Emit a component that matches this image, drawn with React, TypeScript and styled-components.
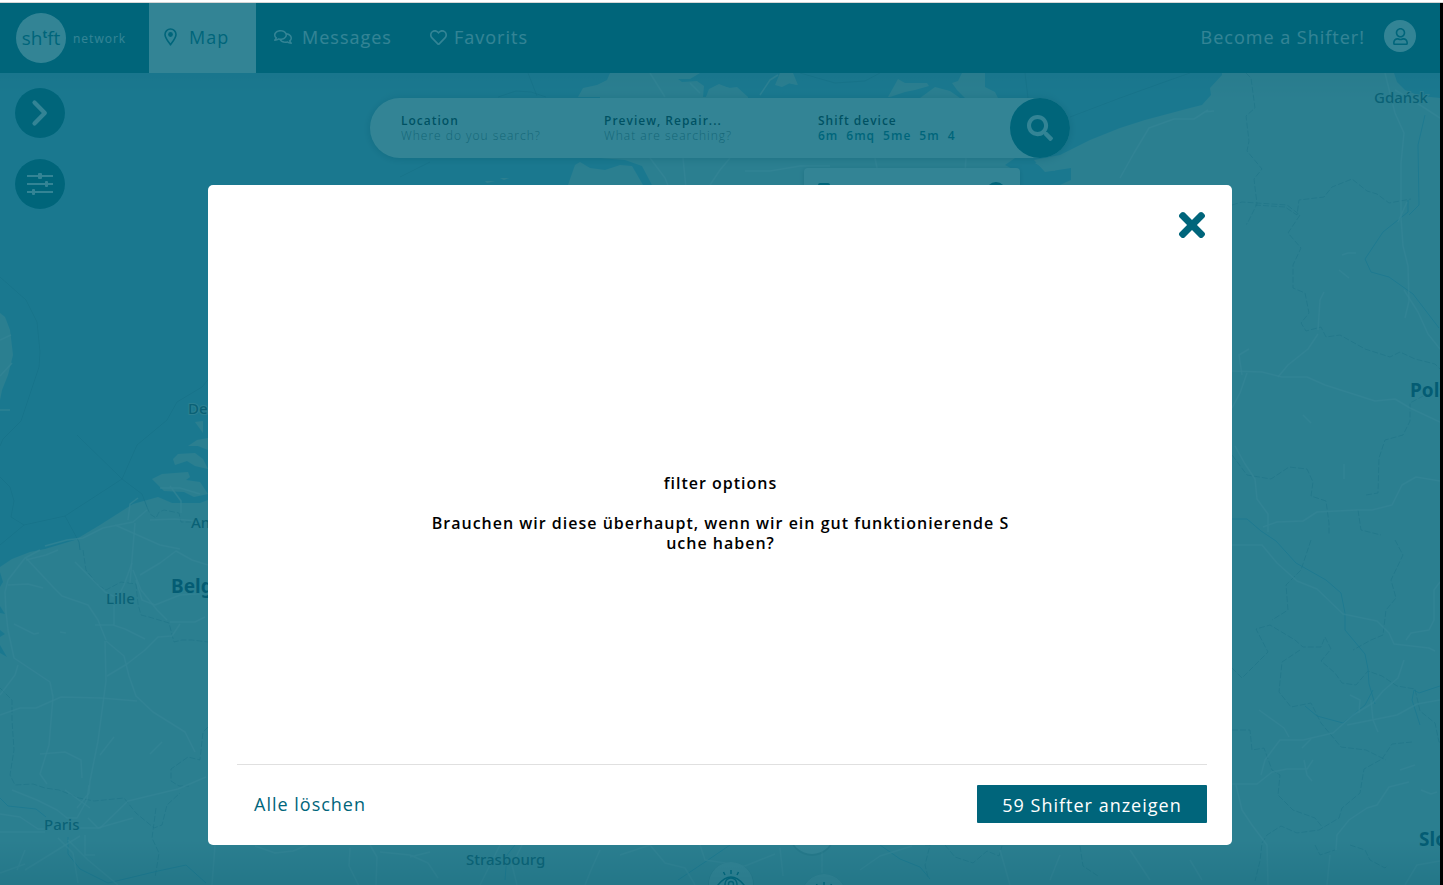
import React from "react";
import styled, { createGlobalStyle } from "styled-components";
import {
  FaRegComments,
  FaRegHeart,
  FaRegUser,
  FaSearch,
  FaTimes,
} from "react-icons/fa";

const brand = "#00657b";
const water = "#84c4e2";
const land = "#d7e4e6";

const GlobalStyle = createGlobalStyle`
  *, *::before, *::after { box-sizing: border-box; }
  body {
    margin: 0;
    background: #fff;
    font-family: "Open Sans", "Noto Sans", sans-serif;
    letter-spacing: 1px;
  }
  button, input { font: inherit; letter-spacing: inherit; }
`;

const Page = styled.div`
  display: flex;
  flex-direction: column;
  min-height: 100vh;
`;

const TopEdge = styled.div`
  height: 3px;
  background: #fff;
  border-bottom: 1px solid #d6d6d6;
`;

const Stage = styled.div`
  position: relative;
  flex: 1;
  display: flex;
  flex-direction: column;
  border-right: 3px solid #000;
  overflow: hidden;
`;

const NavBar = styled.header`
  display: flex;
  align-items: center;
  height: 70px;
  padding: 0 24px 0 16px;
  background: ${brand};
  color: #fff;
`;

const Brand = styled.a`
  display: flex;
  align-items: center;
  gap: 7px;
  width: 133px;
  color: #fff;
  text-decoration: none;
`;

const LogoDisc = styled.span`
  display: flex;
  align-items: center;
  justify-content: center;
  width: 50px;
  height: 50px;
  border-radius: 50%;
  background: #fff;
  color: ${brand};
  font: 500 19px/24px "Open Sans", sans-serif;
  letter-spacing: 0;
`;

const RaisedLetter = styled.span`
  font-size: 11px;
  font-weight: 700;
  line-height: 12px;
  align-self: flex-start;
  margin-top: 15px;
`;

const BrandName = styled.span`
  font-size: 12px;
  font-weight: 400;
  line-height: 16px;
  padding-top: 2px;
`;

const Nav = styled.nav`
  display: flex;
  align-self: stretch;
  flex: 1;
`;

const NavLink = styled.a<{ $active?: boolean; $gap: number; $width: number }>`
  display: flex;
  align-items: center;
  gap: ${(p) => p.$gap}px;
  width: ${(p) => p.$width}px;
  padding-left: ${(p) => (p.$active ? 15 : 18)}px;
  padding-bottom: 2px;
  background: ${(p) => (p.$active ? "#fff" : "transparent")};
  color: ${(p) => (p.$active ? brand : "#fff")};
  font-size: 18px;
  font-weight: 400;
  line-height: 24px;
  text-decoration: none;
  svg { flex: none; }
`;

const Account = styled.div`
  display: flex;
  align-items: center;
  gap: 19px;
  padding-bottom: 4px;
`;

const JoinLink = styled.a`
  padding-top: 2px;
  color: #fff;
  font-size: 18px;
  font-weight: 400;
  line-height: 24px;
  text-decoration: none;
`;

const Round = styled.button<{ $size: number; $light?: boolean }>`
  display: flex;
  align-items: center;
  justify-content: center;
  flex: none;
  width: ${(p) => p.$size}px;
  height: ${(p) => p.$size}px;
  padding: 0;
  border: 0;
  border-radius: 50%;
  background: ${(p) => (p.$light ? "#fff" : brand)};
  color: ${(p) => (p.$light ? brand : "#fff")};
`;

const MapArea = styled.main`
  position: relative;
  flex: 1;
  display: flex;
  align-items: flex-start;
  padding: 15px;
  background: ${water};
`;

const MapCanvas = styled.svg`
  position: absolute;
  inset: 0;
  width: 100%;
  height: 100%;
  letter-spacing: 0;
`;

const MapShade = styled.div`
  position: absolute;
  inset: 0;
  background: linear-gradient(to top, rgba(60, 60, 60, 0.24), rgba(60, 60, 60, 0) 45px),
    linear-gradient(to bottom, rgba(60, 60, 60, 0.08), rgba(60, 60, 60, 0) 26px);
`;

const SideTools = styled.div`
  position: relative;
  display: flex;
  flex-direction: column;
  gap: 21px;
  flex: 1;
`;

const SearchBar = styled.form`
  position: relative;
  display: grid;
  grid-template-columns: 203px 214px 1fr 60px;
  align-items: center;
  width: 700px;
  height: 60px;
  margin-top: 10px;
  padding-left: 31px;
  border-radius: 30px;
  background: #fff;
  box-shadow: 0 1px 8px rgba(0, 0, 0, 0.3);
`;

const Spacer = styled.div`
  flex: 1;
`;

const Field = styled.div`
  display: flex;
  flex-direction: column;
  font-size: 12px;
  line-height: 15px;
`;

const FieldLabel = styled.label`
  color: #000;
  font-weight: 600;
`;

const FieldInput = styled.input`
  width: 180px;
  height: 15px;
  padding: 0;
  border: 0;
  background: transparent;
  font-weight: 300;
  outline: 0;
  &::placeholder { color: #666; opacity: 1; }
`;

const Devices = styled.div`
  display: flex;
  gap: 8px;
  color: ${brand};
  font-weight: 600;
`;

const Popup = styled.div`
  position: absolute;
  left: 804px;
  top: 95px;
  display: flex;
  justify-content: space-between;
  width: 216px;
  height: 120px;
  padding: 14px;
  border-radius: 4px;
  background: #fff;
  color: ${brand};
  box-shadow: 0 1px 5px rgba(0, 0, 0, 0.3);
`;

const Overlay = styled.div`
  position: absolute;
  inset: 0;
  display: flex;
  justify-content: center;
  padding: 182px 40px 40px;
  background: rgba(0, 101, 123, 0.8);
`;

const Modal = styled.section`
  display: flex;
  flex-direction: column;
  width: 100%;
  max-width: 1024px;
  padding: 21px 25px 22px 29px;
  border-radius: 5px;
  background: #fff;
`;

const CloseButton = styled.button`
  align-self: flex-end;
  display: flex;
  padding: 0;
  border: 0;
  background: transparent;
  color: ${brand};
  margin-right: -4px;
`;

const ModalBody = styled.div`
  flex: 1;
  display: flex;
  flex-direction: column;
  align-items: center;
  justify-content: center;
  gap: 20px;
  padding: 24px 3px 6px 0;
  color: #000;
  font-size: 16px;
  font-weight: 600;
  line-height: 20px;
  text-align: center;
`;

const ModalTitle = styled.h2`
  margin: 0;
  font-size: 16px;
  font-weight: 600;
`;

const ModalText = styled.p`
  margin: 0;
`;

const ModalFooter = styled.footer`
  display: flex;
  align-items: center;
  justify-content: space-between;
  padding: 20px 0 0 17px;
  border-top: 1px solid #e0e0e0;
  font-size: 18px;
  line-height: 24px;
`;

const ClearButton = styled.button`
  padding: 0;
  border: 0;
  background: transparent;
  color: ${brand};
`;

const ShowButton = styled.button`
  width: 230px;
  height: 38px;
  padding: 2px 0 0;
  border: 0;
  border-radius: 1px;
  background: ${brand};
  color: #fff;
`;

const PinIcon = () => (
  <svg width="13" height="18" viewBox="0 0 13 18" fill="none" aria-hidden="true">
    <path d="M6.5 16.8C5.6 15.2 1 10.300 1 6.500a5.500 5.500 0 0 1 11 0c0 3.800-4.600 8.700-5.500 10.300z" stroke="currentColor" strokeWidth="1.600" strokeLinejoin="round" />
    <circle cx="6.5" cy="6.500" r="2.400" fill="currentColor" />
  </svg>
);

const ChevronIcon = () => (
  <svg width="18" height="28" viewBox="0 0 18 28" fill="none" aria-hidden="true">
    <path d="M3.500 3.500L13.800 14 3.500 24.500" stroke="currentColor" strokeWidth="4.200" strokeLinecap="round" strokeLinejoin="round" />
  </svg>
);

const SlidersIcon = () => (
  <svg width="26" height="24" viewBox="0 0 26 24" fill="currentColor" aria-hidden="true">
    <rect x="0" y="3" width="26" height="2" />
    <rect x="0" y="11" width="26" height="2" />
    <rect x="0" y="19" width="26" height="2" />
    <rect x="11" y="1" width="4" height="6" rx="1" />
    <rect x="18" y="9" width="3" height="6" rx="1" />
    <rect x="5" y="17" width="3" height="6" rx="1" />
  </svg>
);

const Eye = ({ x, y }: { x: number; y: number }) => (
  <g transform={`translate(${x} ${y})`}>
    <circle r="23" fill="#000" opacity="0.12" cy="1" />
    <circle r="22" fill="#fff" />
    <g fill="none" stroke={brand} strokeWidth="1.500">
      <path d="M-13 1Q0-15 13 1Q0 15-13 1Z" />
      <circle r="6" cy="0" />
      <circle r="2.500" cy="0" />
      <path d="M-6-9l-1.500-3M0-10v-4M6-9l1.500-3" />
    </g>
  </g>
);

const roads = [
  "M0 410h10M0 376l12-13M0 340l11-5",
  "M40 550L25 558 8 580 5 592 6 612 8 630 14 658 50 682 53 697 49 745 40 774 47 784",
  "M26 558l28 30 8 8 26 9 10 15 8 20",
  "M26 560l20-5 12-5M75 562l30 30 20 10M130 583l5-60M140 575l20-12 16-12 16 9 16 5",
  "M8 585l20-1 15 4M14 624l20 10 5-1M60 632l6 1M105 641l1 40-8 60-8 40-1 12-12 15",
  "M106 641l18 15 5 20 7 20 17 16 32 20 10 20M107 676l20-12 18-14 13-13 14-1 8-12",
  "M95 625l18 0 12 4 20 10M114 625l0-20 10-20 8-22M133 570l8 20 16 20 10 10",
  "M136 580l6 20 13 5 25-10 28-2M170 622l25 0 10-5M0 715l20-7 16 0 25-11 40 1 36 3",
  "M0 695l15-20 3-10M40 754l25-2 16 8 1 18M100 755l14-18M150 754l12-12",
  "M12 790l25 10 20 10 10 8 10 0 10-18 2-15M0 814l20 3 18 12 12 0M0 832h45M25 870l55-34",
  "M58 838l15 15 5 30M68 840l20 20 30 25M80 828l20 0 28-27 50-12 28-12M85 835l0 20 10 0",
  "M65 790l25 18M88 818l10 10 35-10M0 873l25-9M25 850l-8 20",
  "M45 546l22-6 16-2 20-10 30-6 14-12M128 520l2-16 8-6M115 525l45 20 20 4M150 520l25-1 33 3M170 486l11 15 0 12M160 488l20 0 20 6",
  "M650 73l15 24M690 83l10 10M760 95l10-15 8-5",
  "M650 158l15 20 4 10M683 158l3 30M710 185l10-15 10-12M745 171l25 0 30-5 30 0M875 158l4 20M966 158l-2 30",
  "M1120 178l14-25 15-25 25-9 20 0 14-9M1204 112l10-1M1385 73l5 20 5 20 9 20-3 30 0 55 2 28 5 20 1 35-4 17",
  "M1395 90l25 15 20 13M1398 222l9-20M1404 290l14 22 10 22 12 15M1232 371l30 1 20 5 25 0 18 8 50 16 20-2 15 9 30 14",
  "M1278 377l10-12 20-16 10-15M1318 330l2-30 4-8M1242 375l-3-20 10-6M1247 373l-7 20-8 15M1342 255l6-2 8 0M1339 270l10 8M1303 415l8 8",
  "M1235 446l10 18 10 15 2 20 11 15 0 18M1263 527l14-5 26-1 14-9 40-2 15 0 20-5 10-20 14-8 24 4M1344 464l0 15",
  "M1232 545l30 0 15 18 20 18 20 8 26 25 34 7 12 12 5 11 35 4 6 3",
  "M1406 640l5-7 18-3 5-10 0-30 6-8M1404 660l-6 18-15 13-10 12-20 12-20 18-30 7-23 0-15 20-4 15",
  "M1259 710l25 18 5 9M1302 748l9-9M1347 725l30-6 20-4 20-11 23-4M1371 700l2 20 5 12M1350 695l10 5-1 13",
  "M1232 784l25 0 15-12 15-3 20 0 6-9M1304 760l3 15 5 6M1236 785l6 25 10 15 15 20 1 40",
  "M1336 850l1-15 12-15 18-12 10-3 12-18 20-5M1400 770l15-5M1330 855l-3 30M1421 790l10 4 6-2M1405 885l12-20 23-4",
  "M215 845l-3 40M255 846l20 7 18-2 15-6M350 848l-1 18 10 20M370 845l7 12-1 28M380 852l30 3 18 8 10 15M430 852l-20 5M500 845l-20 40M522 845l-10 20 5 20M600 850l-9 20-6 15",
  "M620 855l30-10 15 18 20 5 10 17M700 845l5 15 40 6 30-12M780 848l3 28M822 845l0 28M860 870l20-14 32-10M1000 850l10 35M1060 855l-10 25M1130 850l20 30M1190 860l12 20",
];

const borders = [
  "M83 550l3 20 12 15 8 5 15-8 15 2 2 20 3 11 8 2 20 6 5 19 8-2 10 0 16 2",
  "M147 507l3 7 6 4 3-6 5-2 15 3 2 9 10 0M0 688l12 12 0 20 2 30-4 25 5 10 18-1 12 4 14 2 20 8 15 3 30-3 12 15 18 15 8-3 5-20 13-12M156 808l-4 30 7 15-4 25",
  "M208 727l-5 5-3 28-12-3-17 12 0 12 8 5 10 0",
  "M1246 73l5 5 2 15 2 15-9 8 3 25-2 10 15 18-8 10 3 25-10 20-1 0M1255 205l30 2 12 8 2-15 25-3 8-10 20-8 15 12 10 3 12 9 22-4",
  "M1232 205l10-3 45 3 13 10-12 18 13 15-8 17 0 23 12 5 4 20-8 10 5 8 15-4 5 10 14-2 25 14 25 8 10-5 15 7 20 5 12 12 20-6 15-5",
  "M1232 455l15 20 24 4 18-12 18 2 6 13-2 14 15 5 3 22 0 12M1358 510l3 20 20 5M1366 495l12-2 1-35 6-18 18-5 7-14 0-18 15-8",
  "M1232 668l10 10 8-8 18-18-12-23 14-4 25 15 8 7 18 0 4-10 6 12-10 12 14 12 7 10 14 2 12-14 14 5 15 10 18 3 5 22 15 12 4 19 18 0 2 14 18-3",
  "M1412 742l-20 2-10 15-18 10-4 24-18 15-3 10-20 12-22 3-16-7-14 9-5 8-2 18-5 20",
  "M1311 540l-10 30-15 15 2 25-16 10M1395 540l8 15-12 25 5 18-10 12-3 25-12 5-18 10M1300 650l-18 12-3 30 12 15 20-4 10 20 20 24 25 3 20 10",
  "M1232 730l18 0 2 20 12-2 8 22 8 5-2 20 15 15 22 8 8 10M1350 845l15 5 5 10 15 8 3-3M1315 845l5 10 15-5",
  "M925 845l5 0-5 20 3 12M945 845l10 12 18 6 14-12 12 5 3-10M1080 846l3 20 15 10",
];

const rivers = [
  "M0 798l8 8 28 3 10 8M68 837l0 17 12 15 28 14 50-12 28-6 20 18",
  "M1408 200l0 12-25 20-18 27 6 13 18 5 24 17 26 34",
  "M1425 115l-7 30 1 60-10 10M1232 519l15 0 14 12 15 10 20 22 30 17 15 13 4 20 0 17 20 24 3 15 1 15 6 20M1373 690l-8 15-22 18-26-7-12-10",
  "M1414 690l5 3 21-7M1414 690l-2 10 8 25M515 845l-8 10-2 25M730 845l-22 15-30 20M880 845l20 14 20 8 10 12",
];

const Label = ({ x, y, bold, children }: { x: number; y: number; bold?: boolean; children: string }) => (
  <text
    x={x}
    y={y}
    fill={bold ? "#143a58" : "#365260"}
    fontSize={bold ? 19 : 15}
    fontWeight={bold ? 700 : 500}
    stroke={land}
    strokeWidth="2"
    paintOrder="stroke"
    fontFamily="Noto Sans, sans-serif"
  >
    {children}
  </text>
);

const EuropeMap = () => (
  <MapCanvas role="img" aria-label="Map">
    <g transform="translate(0 -73)">
      <path
        fill={land}
        d="M0 567L12 559 30 552 45 549 75 540 100 525 133 504 158 497 172 503 200 503 208 500V440L560 200L568 185 575 165 580 162 590 168 605 170 620 165 632 166 643 185H652L642 166 625 160 600 158V97H578L583 88 597 85 607 80 610 73H700L690 79 678 79 682 82 697 81 704 86 703 97H706L708 90 718 85 730 88 748 97V158H1015L1005 165 1018 172 1020 185H1060L1071 180 1071 168 1045 172 1034 160 1060 155 1090 140 1120 128 1145 120 1190 108 1202 105 1211 95 1210 88 1222 75V73H1394L1397 82 1405 90 1420 96 1440 98V1200H0Z"
      />
      <path
        fill={land}
        d="M0 313l5 4 5 13 3 25-5 20-6 15-2 10zM152 479l10-5 26-2 2 5-4 3 14 2 8 12-14 3-10-5-20-1zM173 459l5-5 17-1 8 6 5 10-13-3-8-5-12 4zM188 446l9-6 11-2v12l-10-4zM195 422l8-1v12zM775 80l5-7h12l5 12-10-2-8 3zM888 97l10-18 7 4h22l2 3-14 4-10 2-15 5zM920 98l15-11 15 4 10 7zM952 83l6-2 4-8h23v14l10 5 3 6h-33l-8-8zM1035 163l17-4 3 12-12-3zM485 181l10 0-8 2zM500 178h9l-5 2z"
      />
      <path fill={water} d="M0 572l3 10-3 5zM0 606l5 8-5-1zM0 630l5 4-5 3zM0 645l7 12-7-4zM593 79l2-6h15l-3 4-6 3zM705 97l3-8 12-4 16 3 12 9h32l14-20-2-4h-90l12 5 6 8z" />
      <path fill={land} d="M775 85l5-12h13l5 12-8-2-8 4zM706 97l3-8 10-5 10 4 8-1 11 10z" />
      <g fill="none" stroke="#6b9db6" strokeOpacity="0.6">
        <path d="M0 277l26 23 11 22 3 30-1 15-18 54-18 18-3 7M77 435l45 44-57 37-41 9-13-8 3-16-4-14-10-10M122 479l15-34 30-25 10-18 25-15 10-12M65 516l14 26 1 8M122 479l20 15 5 13M24 525l-24 20M400 177l30-15M498 97l18-6 15 1 15 5M528 73l9 23M800 73l35 10 30-2 15-8M1025 73l3 25M1070 117l50-19 50-18 20-7" />
      </g>
      <g fill="none" stroke="#93abb5" strokeOpacity="0.6" strokeDasharray="6 2">
        {borders.map((d) => (
          <path key={d} d={d} />
        ))}
      </g>
      <g fill="none" stroke={water} strokeOpacity="0.8" strokeLinejoin="round">
        {rivers.map((d) => (
          <path key={d} d={d} />
        ))}
      </g>
      <g fill="none" stroke="#fff" strokeOpacity="0.7" strokeWidth="1.500" strokeLinejoin="round">
        {roads.map((d) => (
          <path key={d} d={d} />
        ))}
      </g>
      <Label x={1374} y={103}>Gdańsk</Label>
      <Label x={188} y={414}>Den Haag</Label>
      <Label x={191} y={528}>Antwerpen</Label>
      <Label x={106} y={604}>Lille</Label>
      <Label x={44} y={830}>Paris</Label>
      <Label x={466} y={865}>Strasbourg</Label>
      <Label x={171} y={593} bold>België</Label>
      <Label x={1410} y={397} bold>Polska</Label>
      <Label x={1419} y={846} bold>Slovensko</Label>
      <Eye x={812} y={832} />
      <Eye x={731} y={884} />
      <Eye x={824} y={896} />
    </g>
  </MapCanvas>
);

export default function App() {
  return (
    <Page>
      <GlobalStyle />
      <TopEdge />
      <Stage>
        <NavBar>
          <Brand href="#">
            <LogoDisc>
              sh<RaisedLetter>t</RaisedLetter>ft
            </LogoDisc>
            <BrandName>network</BrandName>
          </Brand>
          <Nav>
            <NavLink href="#map" $active $gap={12} $width={107}>
              <PinIcon />
              Map
            </NavLink>
            <NavLink href="#messages" $gap={10} $width={156}>
              <FaRegComments size={18} />
              Messages
            </NavLink>
            <NavLink href="#favorits" $gap={7} $width={130}>
              <FaRegHeart size={17} />
              Favorits
            </NavLink>
          </Nav>
          <Account>
            <JoinLink href="#join">Become a Shifter!</JoinLink>
            <Round type="button" $size={32} $light aria-label="Account">
              <FaRegUser size={17} />
            </Round>
          </Account>
        </NavBar>
        <MapArea>
          <EuropeMap />
          <MapShade />
          <Popup>
            <svg width="12" height="16" viewBox="0 0 12 16" fill="none" stroke="currentColor" strokeWidth="2" aria-hidden="true">
              <rect x="1" y="2" width="10" height="13" rx="1" />
            </svg>
            <Round type="button" $size={20} aria-label="Close popup" />
          </Popup>
          <SideTools>
            <Round type="button" $size={50} aria-label="Open list">
              <ChevronIcon />
            </Round>
            <Round type="button" $size={50} aria-label="Filter">
              <SlidersIcon />
            </Round>
          </SideTools>
          <SearchBar>
            <Field>
              <FieldLabel htmlFor="location">Location</FieldLabel>
              <FieldInput id="location" placeholder="Where do you search?" />
            </Field>
            <Field>
              <FieldLabel htmlFor="service">Preview, Repair...</FieldLabel>
              <FieldInput id="service" placeholder="What are searching?" />
            </Field>
            <Field>
              <FieldLabel as="span">Shift device</FieldLabel>
              <Devices>
                <span>6m</span>
                <span>6mq</span>
                <span>5me</span>
                <span>5m</span>
                <span>4</span>
              </Devices>
            </Field>
            <Round type="button" $size={60} aria-label="Search">
              <FaSearch size={26} />
            </Round>
          </SearchBar>
          <Spacer />
        </MapArea>
        <Overlay>
          <Modal role="dialog" aria-labelledby="filter-title">
            <CloseButton type="button" aria-label="Close">
              <FaTimes size={38} />
            </CloseButton>
            <ModalBody>
              <ModalTitle id="filter-title">filter options</ModalTitle>
              <ModalText>
                Brauchen wir diese überhaupt, wenn wir ein gut funktionierende S
                <br />
                uche haben?
              </ModalText>
            </ModalBody>
            <ModalFooter>
              <ClearButton type="button">Alle löschen</ClearButton>
              <ShowButton type="button">59 Shifter anzeigen</ShowButton>
            </ModalFooter>
          </Modal>
        </Overlay>
      </Stage>
    </Page>
  );
}
